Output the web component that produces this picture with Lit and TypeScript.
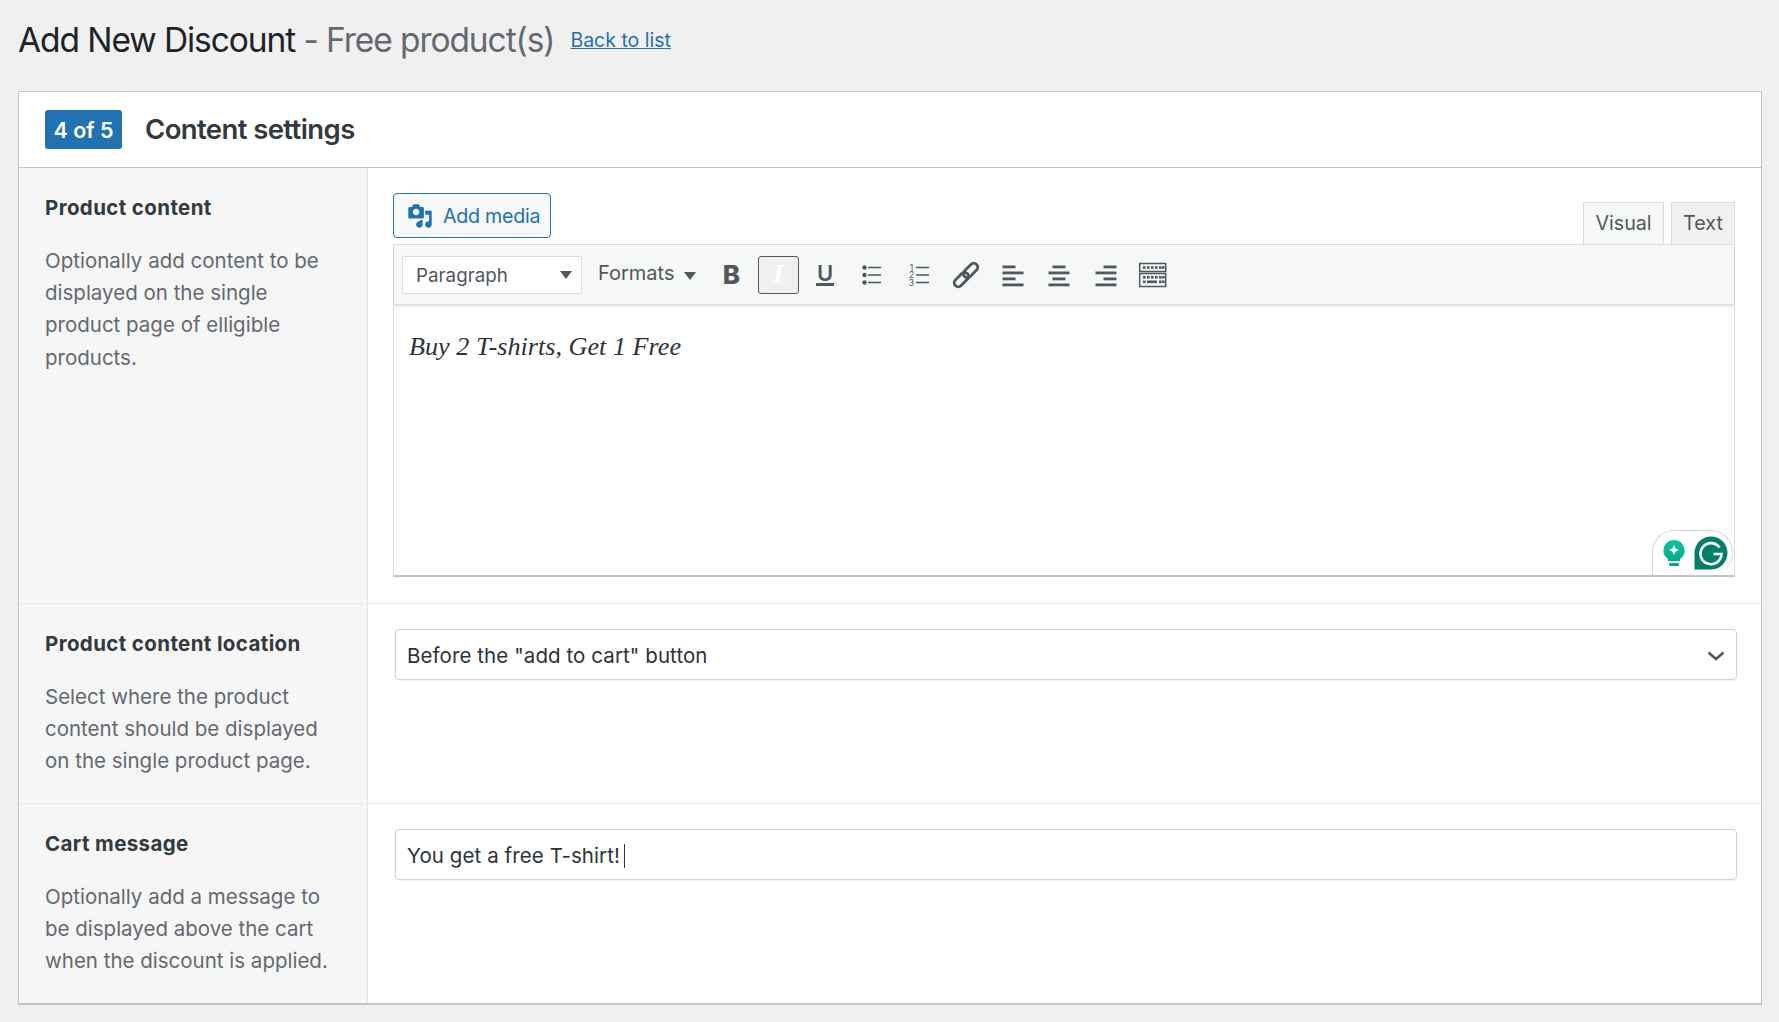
import { LitElement, html, css, svg } from 'lit';
import { customElement } from 'lit/decorators.js';

const sinkKeys = (y: number, xs: number[], w = 2.6) =>
  xs.map((x) => svg`<rect x=${x} y=${y} width=${w} height="2.6" />`);

@customElement('app-root')
export class AppRoot extends LitElement {
  static styles = css`
    :host {
      display: block;
      min-height: 1022px;
      background: #f0f0f1;
      font-family: Inter, "Liberation Sans", sans-serif;
      color: #3c434a;
      overflow: hidden;
    }

    .page-head {
      display: flex;
      align-items: center;
      height: 91px;
      padding: 0 0 11px 18px;
      box-sizing: border-box;
    }

    h1 {
      margin: 0;
      font-size: 33.5px;
      line-height: 46px;
      font-weight: 400;
      color: #1d2327;
      letter-spacing: -1.08px;
      white-space: nowrap;
    }

    h1 span {
      color: #646970;
    }

    .back {
      margin-left: 16px;
      font-size: 19.5px;
      color: #2271b1;
      text-decoration: underline;
    }

    .panel {
      width: 1744px;
      height: 914px;
      margin-left: 18px;
      box-sizing: border-box;
      background: #fff;
      border: 1px solid #c3c4c7;
      border-bottom-width: 2px;
    }

    .panel-head {
      display: flex;
      align-items: center;
      gap: 23px;
      height: 76px;
      padding: 0 26px;
      box-sizing: border-box;
      border-bottom: 1px solid #c3c4c7;
    }

    .badge {
      display: flex;
      align-items: center;
      justify-content: center;
      width: 77px;
      height: 39px;
      border-radius: 3px;
      background: #2271b1;
      color: #fff;
      font-size: 21.5px;
      font-weight: 600;
    }

    h2 {
      margin: 0 0 2px;
      font-size: 27.5px;
      font-weight: 600;
      color: #32393f;
      letter-spacing: -0.6px;
    }

    .row {
      display: grid;
      grid-template-columns: 349px 1fr;
      border-bottom: 1px solid #e9eaeb;
    }

    .row:last-child {
      border-bottom: 0;
    }

    .label {
      padding: 24px 26px 25.3px;
      background: #f6f6f6;
      border-right: 1px solid #e4e5e6;
    }

    .label h3 {
      margin: 0 0 20.5px;
      font-size: 20.5px;
      line-height: 32px;
      font-weight: 700;
      color: #32393f;
      letter-spacing: 0.38px;
    }

    .label p {
      margin: 0;
      font-size: 20.5px;
      line-height: 32.4px;
      color: #646970;
    }

    .field {
      padding: 25px 26px 26px 25px;
    }

    .field.plain {
      padding: 25px 24px 0 27px;
    }

    .editor-tools {
      display: flex;
      justify-content: space-between;
      align-items: flex-end;
      height: 51px;
    }

    .add-media {
      display: flex;
      align-items: center;
      gap: 10px;
      width: 158px;
      height: 45px;
      padding-left: 13px;
      box-sizing: border-box;
      align-self: flex-start;
      border: 1px solid #2271b1;
      border-radius: 4px;
      background: #f6f7f7;
      color: #2271b1;
      font-size: 19.7px;
      letter-spacing: -0.3px;
    }

    .add-media svg {
      width: 26px;
      height: 26px;
      fill: #2271b1;
    }

    .tabs {
      display: flex;
      gap: 7px;
      margin-bottom: -1px;
    }

    .tab {
      height: 43px;
      padding-bottom: 1px;
      box-sizing: border-box;
      border: 1px solid #dcdcde;
      display: flex;
      align-items: center;
      justify-content: center;
      font-size: 19.7px;
      color: #50575e;
      background: #f0f0f1;
      width: 64px;
    }

    .tab.on {
      width: 81px;
      background: #f6f7f7;
      border-bottom-color: #f6f7f7;
      position: relative;
    }

    .editor {
      position: relative;
      height: 333px;
      box-sizing: border-box;
      border: 1px solid #dcdcde;
      border-bottom: 2px solid #c3c4c7;
      background: #fff;
    }

    .toolbar {
      display: flex;
      align-items: center;
      height: 60px;
      padding-left: 8px;
      box-sizing: border-box;
      background: #f6f7f7;
      border-bottom: 1px solid #dcdcde;
      box-shadow: 0 2px 3px rgba(0, 0, 0, 0.1);
      color: #50575e;
    }

    .para {
      display: flex;
      align-items: center;
      justify-content: space-between;
      width: 180px;
      height: 38px;
      padding: 2px 9px 0 13px;
      box-sizing: border-box;
      background: #fff;
      border: 1px solid #dcdcde;
      font-size: 18.8px;
    }

    .para .caret {
      margin-top: -1px;
    }

    .formats {
      display: flex;
      align-items: center;
      gap: 9px;
      width: 129px;
      padding: 0 0 4px 16px;
      box-sizing: border-box;
      font-size: 20px;
    }

    .caret {
      width: 0;
      height: 0;
      border-left: 6px solid transparent;
      border-right: 6px solid transparent;
      border-top: 8px solid #50575e;
    }

    .formats .caret {
      margin-top: 6px;
    }

    .btns {
      display: flex;
      gap: 5.85px;
    }

    .btn {
      display: flex;
      align-items: center;
      justify-content: center;
      width: 41px;
      height: 38px;
      box-sizing: border-box;
      border: 1px solid transparent;
      border-radius: 2px;
      font-size: 24px;
      line-height: 1;
    }

    .btn svg {
      width: 30px;
      height: 30px;
      overflow: visible;
    }

    .btn.b {
      font-weight: 800;
      font-size: 26px;
    }

    .btn.i {
      border-color: #50575e;
      border-radius: 3px;
      background: #f0f0f1;
      color: #fff;
      font: italic 700 27px "Liberation Serif", serif;
    }

    .btn.u {
      font-size: 22px;
      font-weight: 600;
    }

    .btn.u span {
      border-bottom: 3px solid #50575e;
      line-height: 20px;
      padding: 0 1px;
    }

    .body-text {
      margin: 0;
      padding: 24px 15px;
      font: italic 26.2px/36px "Liberation Serif", serif;
      color: #2c3338;
    }

    .gram {
      position: absolute;
      right: 1px;
      bottom: 0;
      display: flex;
      align-items: center;
      gap: 8px;
      width: 81px;
      height: 45px;
      padding-left: 9px;
      box-sizing: border-box;
      background: #fff;
      border: 1px solid #d5d7e3;
      border-bottom: 0;
      border-radius: 22px 22px 22px 0;
    }

    .input {
      display: flex;
      align-items: center;
      justify-content: space-between;
      height: 51px;
      padding: 2px 11px 0 11px;
      box-sizing: border-box;
      border: 1px solid #cfd1dc;
      border-radius: 4px;
      box-shadow: 0 1px 2px rgba(0, 0, 0, 0.06);
      font-size: 20.5px;
      letter-spacing: 0.08px;
      color: #2c3338;
    }

    .input .text {
      display: flex;
      align-items: center;
    }

    .cursor {
      display: inline-block;
      width: 1px;
      height: 24px;
      margin-left: 4px;
      background: #2c3338;
    }
  `;

  private alignIcon(lines: [number, number][]) {
    return html`<svg viewBox="0 0 30 30" fill="#50575e">
      ${lines.map(([x, w], i) => svg`<rect x=${x} y=${5.5 + i * 6} width=${w} height="2.8" />`)}
    </svg>`;
  }

  render() {
    return html`
      <header class="page-head">
        <h1>Add New Discount <span>- Free product(s)</span></h1>
        <a class="back">Back to list</a>
      </header>
      <section class="panel">
        <div class="panel-head">
          <div class="badge">4 of 5</div>
          <h2>Content settings</h2>
        </div>

        <div class="row">
          <div class="label">
            <h3>Product content</h3>
            <p>Optionally add content to be displayed on the single product page of elligible products.</p>
          </div>
          <div class="field">
            <div class="editor-tools">
              <div class="add-media">
                <svg viewBox="0 0 20 20">
                  <path d="M13 11V4c0-.55-.45-1-1-1h-1.67L9 1H5L3.67 3H2c-.55 0-1 .45-1 1v7c0 .55.45 1 1 1h10c.55 0 1-.45 1-1zM7 4.500c1.380 0 2.500 1.120 2.500 2.500S8.380 9.500 7 9.500 4.500 8.380 4.500 7 5.620 4.500 7 4.500zM14 6h5v10.500c0 1.380-1.120 2.500-2.500 2.500S14 17.880 14 16.500s1.120-2.500 2.500-2.500c.17 0 .34.020.5.050V9h-3V6zm-4 8.050V13h2v3.500c0 1.380-1.120 2.500-2.500 2.500S7 17.880 7 16.500 8.120 14 9.500 14c.17 0 .34.020.5.050z" />
                </svg>
                Add media
              </div>
              <div class="tabs">
                <div class="tab on">Visual</div>
                <div class="tab">Text</div>
              </div>
            </div>
            <div class="editor">
              <div class="toolbar">
                <div class="para">Paragraph <i class="caret"></i></div>
                <div class="formats">Formats <i class="caret"></i></div>
                <div class="btns">
                  <div class="btn b">B</div>
                  <div class="btn i">I</div>
                  <div class="btn u"><span>U</span></div>
                  <div class="btn">
                    <svg viewBox="0 0 30 30">
                      <g fill="#50575e"><circle cx="7.500" cy="7.500" r="2.200" /><circle cx="7.500" cy="15" r="2.200" /><circle cx="7.500" cy="22.500" r="2.200" /></g>
                      <path d="M11 7.500h13M11 15h13M11 22.500h13" stroke="#50575e" stroke-width="1.400" />
                    </svg>
                  </div>
                  <div class="btn">
                    <svg viewBox="0 0 30 30">
                      <g fill="#50575e" font-size="8.500" font-family="Inter, sans-serif" text-anchor="middle">
                        <text x="7.500" y="10.500">1</text><text x="7.500" y="18">2</text><text x="7.500" y="25.500">3</text>
                      </g>
                      <path d="M12 7.500h13M12 15h13M12 22.500h13" stroke="#50575e" stroke-width="1.400" />
                    </svg>
                  </div>
                  <div class="btn">
                    <svg viewBox="0 0 30 30" fill="none" stroke="#50575e" stroke-width="2.800">
                      <g transform="rotate(45 15 15)">
                        <rect x="11" y="0" width="8" height="17" rx="4" />
                        <rect x="11" y="13" width="8" height="17" rx="4" />
                      </g>
                    </svg>
                  </div>
                  <div class="btn">${this.alignIcon([[4.5, 13], [4.5, 21], [4.5, 13], [4.5, 21]])}</div>
                  <div class="btn">${this.alignIcon([[8.5, 13], [4.5, 21], [8.5, 13], [4.5, 21]])}</div>
                  <div class="btn">${this.alignIcon([[12.5, 13], [4.5, 21], [12.5, 13], [4.5, 21]])}</div>
                  <div class="btn">
                    <svg viewBox="0 0 30 30">
                      <g fill="none" stroke="#50575e" stroke-width="1.500">
                        <rect x="1.700" y="3.500" width="26" height="8" />
                        <rect x="1.700" y="13.500" width="26" height="13" />
                      </g>
                      <g fill="#50575e">
                        ${sinkKeys(6.2, [5, 9, 13, 17, 21, 24])}
                        ${sinkKeys(16, [5, 9, 13, 17, 21, 24])}
                        ${sinkKeys(20.5, [5, 21, 24])}
                        <rect x="9" y="20.500" width="10" height="2.600" />
                      </g>
                    </svg>
                  </div>
                </div>
              </div>
              <p class="body-text">Buy 2 T-shirts, Get 1 Free</p>
              <div class="gram">
                <svg width="24" height="28" viewBox="0 0 24 28">
                  <defs>
                    <linearGradient id="bulb" x1="0" y1="0" x2="0" y2="1">
                      <stop offset="0" stop-color="#0fc4a0" />
                      <stop offset="1" stop-color="#06a88f" />
                    </linearGradient>
                  </defs>
                  <path d="M12 1a10.500 10.500 0 0 1 6 19.100V22H6v-1.900A10.500 10.500 0 0 1 12 1z" fill="url(#bulb)" />
                  <rect x="7" y="24" width="10" height="3" rx="1" fill="#06a88f" />
                  <path d="M12 5.500c.7 3.500 2 4.800 5.500 5.500-3.500.7-4.800 2-5.500 5.500-.7-3.500-2-4.800-5.500-5.500 3.500-.7 4.800-2 5.500-5.500z" fill="#fff" />
                </svg>
                <svg width="34" height="34" viewBox="0 0 34 34">
                  <path d="M17 0.500a16.500 16.500 0 0 1 0 33H0.500V17A16.500 16.500 0 0 1 17 0.500z" fill="#067d68" />
                  <path d="M25.500 11.500A10.500 10.500 0 1 0 27.500 18H19.500" fill="none" stroke="#fff" stroke-width="2.600" />
                </svg>
              </div>
            </div>
          </div>
        </div>

        <div class="row">
          <div class="label">
            <h3>Product content location</h3>
            <p>Select where the product content should be displayed on the single product page.</p>
          </div>
          <div class="field plain">
            <div class="input">
              <span>Before the "add to cart" button</span>
              <svg width="18" height="10" viewBox="0 0 18 10" fill="none" stroke="#50575e" stroke-width="2.600">
                <path d="M1.500 1.500 9 8l7.500-6.500" />
              </svg>
            </div>
          </div>
        </div>

        <div class="row">
          <div class="label">
            <h3>Cart message</h3>
            <p>Optionally add a message to be displayed above the cart when the discount is applied.</p>
          </div>
          <div class="field plain">
            <div class="input">
              <span class="text">You get a free T-shirt!<i class="cursor"></i></span>
            </div>
          </div>
        </div>
      </section>
    `;
  }
}
